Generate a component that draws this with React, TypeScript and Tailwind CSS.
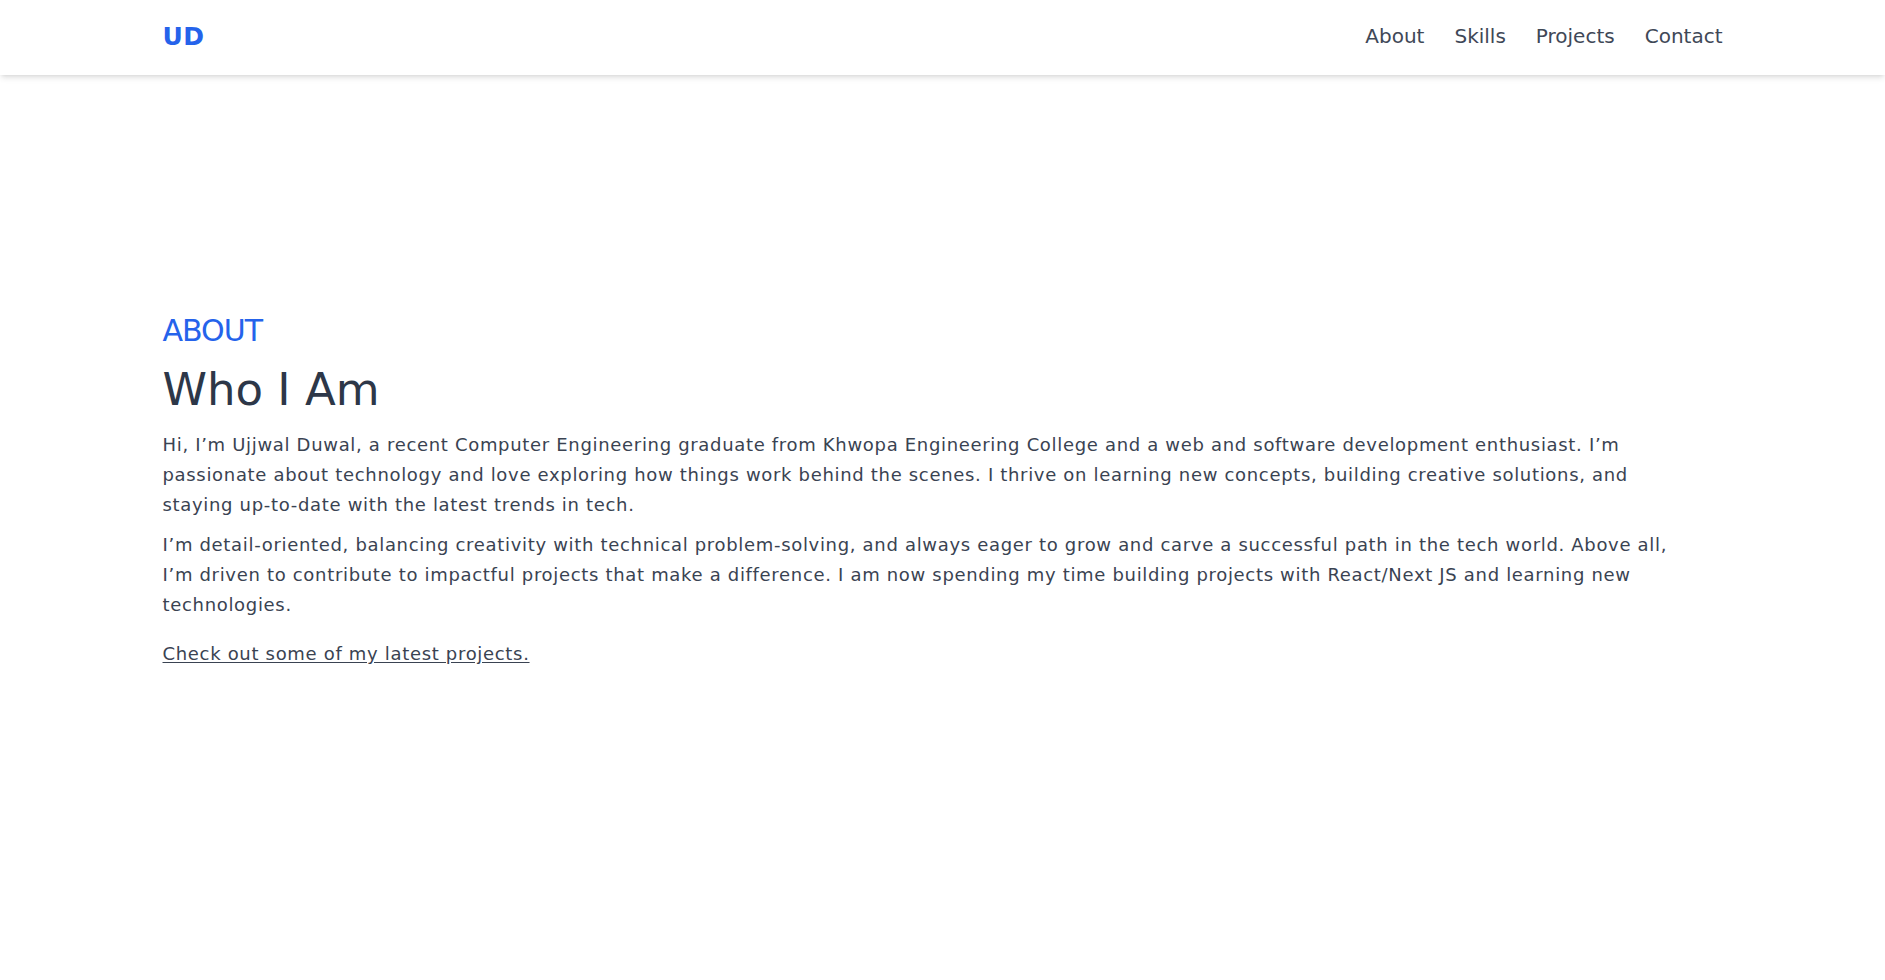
import React from "react";

const NAV_LINKS = [
  { label: "About", href: "#about" },
  { label: "Skills", href: "#skills" },
  { label: "Projects", href: "#projects" },
  { label: "Contact", href: "#contact" },
];

function Navbar() {
  return (
    <header className="relative z-10 w-full bg-white shadow-md">
      <div className="mx-auto flex h-[75px] max-w-[1560px] items-center justify-between pb-[2px]">
        {/* Logo */}
        <span className="text-[25px] font-bold leading-none tracking-[0.5px] text-[#2563eb] select-none">UD</span>

        {/* Nav */}
        <nav className="flex items-center gap-[30px] pb-[2px]">
          {NAV_LINKS.map((link) => (
            <a
              key={link.href}
              href={link.href}
              className="text-[20px] leading-none text-[#3f4857] hover:text-[#2563eb]"
            >
              {link.label}
            </a>
          ))}
        </nav>
      </div>
    </header>
  );
}

export default function App() {
  return (
    <div
      className="min-h-screen bg-white"
      style={{ fontFamily: '"DejaVu Sans", "Noto Sans", sans-serif' }}
    >
      <Navbar />

      <main id="about" className="mx-auto max-w-[1560px] pt-[238px]">
        <p className="text-[30px] leading-[36px] tracking-[-1px] text-[#2563eb]">ABOUT</p>
        <h1 className="mt-[14px] text-[45px] leading-[54px] text-[#2d3748]">Who I Am</h1>

        <div className="mt-[13px] text-[18px] leading-[30px] tracking-[0.68px] text-[#3a4352]">
          <p>
            Hi, I’m Ujjwal Duwal, a recent Computer Engineering graduate from Khwopa Engineering College and a web
            and software development enthusiast. I’m passionate about technology and love exploring how things work
            behind the scenes. I thrive on learning new concepts, building creative solutions, and
            <br />
            staying up-to-date with the latest trends in tech.
          </p>
          <p className="mt-[10px]">
            I’m detail-oriented, balancing creativity with technical problem-solving, and always eager to grow and
            carve a successful path in the tech world. Above all,
            <br />
            I’m driven to contribute to impactful projects that make a difference. I am now spending my time building
            projects with React/Next JS and learning new technologies.
          </p>
          <a href="#projects" className="mt-[19px] inline-block underline underline-offset-2">
            Check out some of my latest projects.
          </a>
        </div>
      </main>
    </div>
  );
}
